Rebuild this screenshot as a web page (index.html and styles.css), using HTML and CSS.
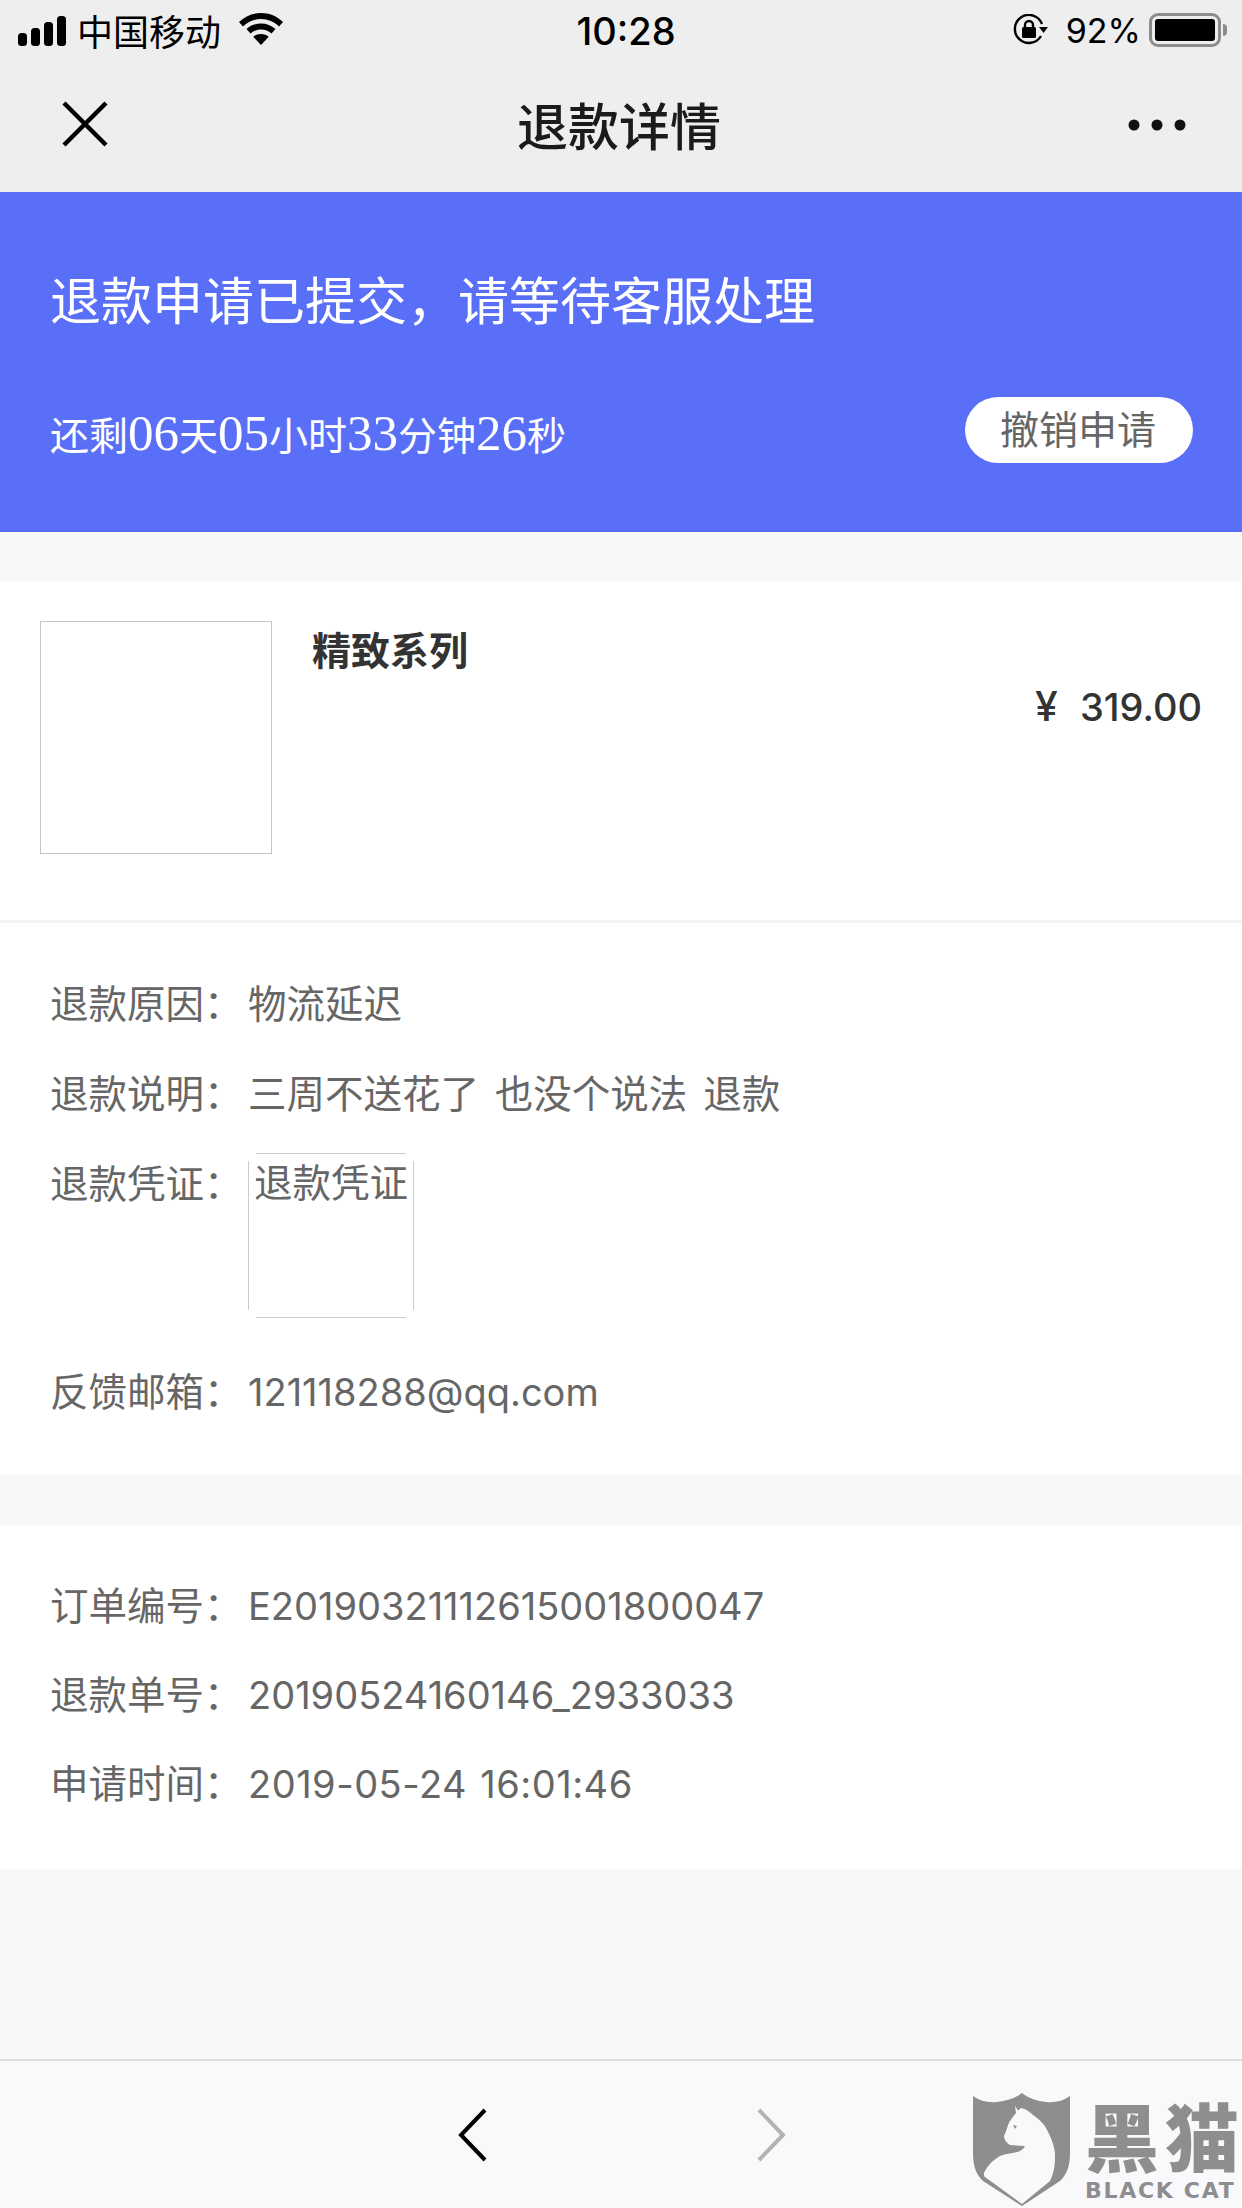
FILE: index.html
```html
<!DOCTYPE html>
<html lang="zh-CN">
<head>
<meta charset="utf-8">
<title>退款详情</title>
<link rel="stylesheet" href="styles.css">
</head>
<body>
<div class="page">
  <header class="top">
    <div class="status">
      <div class="status-left">
        <svg class="signal" width="50" height="30" viewBox="0 0 50 30"><rect x="0" y="17" width="9" height="13" rx="3.5"/><rect x="13" y="12" width="9" height="18" rx="3.5"/><rect x="26" y="6" width="9" height="24" rx="3.5"/><rect x="39" y="0" width="9" height="30" rx="3.5"/></svg>
        <span class="carrier">中国移动</span>
        <svg class="wifi" width="44" height="32" viewBox="0 0 44 32"><path d="M22 0C13.500 0 6 3.200 0 9l4 4.500C9 8.800 15 6 22 6s13 2.800 18 7.500L44 9C38 3.200 30.500 0 22 0z"/><path d="M22 10.500c-5.500 0-10.500 2-14.500 5.500l4 4.500c2.800-2.500 6.500-4 10.500-4s7.700 1.500 10.500 4l4-4.500c-4-3.500-9-5.500-14.500-5.500z"/><path d="M22 21c-3 0-5.600 1-7.700 2.800L22 32l7.700-8.200C27.600 22 25 21 22 21z"/></svg>
      </div>
      <div class="clock">10:28</div>
      <div class="status-right">
        <svg class="lock" width="36" height="32" viewBox="0 0 36 32"><path d="M28 22A14 14 0 1 1 29 10" fill="none" stroke="#000" stroke-width="2.400"/><path d="M26 13h9l-4.500 6z"/><rect x="9" y="13" width="14" height="11" rx="1.500"/><path d="M12 14v-3a4 4 0 0 1 8 0v3" fill="none" stroke="#000" stroke-width="2.400"/></svg>
        <span class="battery-text">92%</span>
        <div class="battery"><div class="battery-fill"></div></div>
        <div class="battery-cap"></div>
      </div>
    </div>
    <div class="nav">
      <svg class="close" width="46" height="46" viewBox="0 0 46 46"><path d="M2 2l42 42M44 2L2 44" fill="none" stroke="#000" stroke-width="4.500"/></svg>
      <h1 class="nav-title">退款详情</h1>
      <svg class="more" width="62" height="14" viewBox="0 0 62 14"><circle cx="8" cy="7" r="5.500"/><circle cx="31" cy="7" r="5.500"/><circle cx="54" cy="7" r="5.500"/></svg>
    </div>
  </header>

  <section class="banner">
    <h2 class="banner-title">退款申请已提交，请等待客服处理</h2>
    <div class="banner-row">
      <div class="countdown">还剩<b>06</b>天<b>05</b>小时<b>33</b>分钟<b>26</b>秒</div>
      <button class="revoke">撤销申请</button>
    </div>
  </section>

  <section class="card product">
    <div class="thumb"></div>
    <div class="product-name">精致系列</div>
    <div class="price"><span class="yen">¥</span>319.00</div>
  </section>
  <section class="card details">
    <div class="row"><span class="label">退款原因：</span><span class="value value-cjk">物流延迟</span></div>
    <div class="row"><span class="label">退款说明：</span><span class="value value-cjk">三周不送花了 也没个说法 退款</span></div>
    <div class="row row-proof"><span class="label">退款凭证：</span><div class="proof">退款凭证</div></div>
    <div class="row"><span class="label">反馈邮箱：</span><span class="value">121118288@qq.com</span></div>
  </section>

  <section class="card order">
    <div class="row"><span class="label">订单编号：</span><span class="value">E20190321112615001800047</span></div>
    <div class="row"><span class="label">退款单号：</span><span class="value">20190524160146_2933033</span></div>
    <div class="row"><span class="label">申请时间：</span><span class="value value-date">2019-05-24 16:01:46</span></div>
  </section>

  <div class="spacer"></div>

  <footer class="toolbar">
    <svg class="chev" width="30" height="54" viewBox="0 0 30 54"><path d="M27 2L3 27l24 25" fill="none" stroke="#000" stroke-width="4"/></svg>
    <svg class="chev chev-next" width="30" height="54" viewBox="0 0 30 54"><path d="M3 2l24 25L3 52" fill="none" stroke="#b3b3b5" stroke-width="4"/></svg>
    <div class="watermark">
      <svg class="shield" width="97" height="114" viewBox="0 0 97 114">
        <path d="M0 3C7 8 15 10 24 9 34 8 43 5 49 0 55 5 64 8 73 9 82 10 90 8 97 3V60C97 75 93 82 87 88L49 113 10 88C4 82 0 75 0 60Z" fill="#8e8d90"/>
        <path d="M42 13L45 17.500 48 15C53 16 57 19 60 22 67 27 71 31 73 35 79 46 82 55 82 63 82 75 80 82 77 88L49 111 12 84C10 82 11 79 12 78 15 72 20 67 27 63 34 60 42 60 47 58 49 57 51 55 52 53L37 52C34 50 31 47 31 43 33 39 34 35 35 32 37 27 40 24 43 20Z" fill="#f9f9fb"/>
        <path d="M40 32l4 1-2 3z" fill="#8e8d90"/>
      </svg>
      <div class="wm-text">
        <div class="wm-cn">黑<span class="wm-cn-last">猫</span></div>
        <div class="wm-en">BLACK CAT</div>
      </div>
    </div>
  </footer>
</div>
</body>
</html>
```

FILE: styles.css
```css
* { box-sizing: border-box; }
html, body { margin: 0; padding: 0; }
body {
  width: 1242px;
  height: 2208px;
  overflow: hidden;
  font-family: "Inter", "Noto Sans CJK SC", sans-serif;
  background: #f8f8f9;
}
.page { display: flex; flex-direction: column; height: 2208px; }

.top { height: 192px; background: #eeeeee; display: flex; flex-direction: column; }
.status { position: relative; height: 60px; display: flex; align-items: center; justify-content: space-between; padding: 0 15px 0 18px; color: #000; }
.status-left { display: flex; align-items: center; }
.signal { margin-top: 1px; }
.carrier { font-size: 36px; margin-left: 9px; line-height: 60px; font-family: "Noto Sans CJK SC", sans-serif; }
.wifi { margin-left: 18px; margin-top: -3px; }
.clock { position: absolute; left: 0; right: 0; top: 0; text-align: center; line-height: 62px; font-size: 38px; font-weight: 500; pointer-events: none; padding-left: 10px; }
.status-right { display: flex; align-items: center; }
.lock { margin-right: 17px; }
.battery-text { font-size: 34px; margin-right: 8px; }
.battery { width: 72px; height: 34px; border: 3px solid #8c8c8c; border-radius: 9px; padding: 3px; }
.battery-fill { width: 100%; height: 100%; background: #000; border-radius: 3px; }
.battery-cap { width: 4px; height: 12px; background: #8c8c8c; border-radius: 0 4px 4px 0; margin-left: 2px; }

.nav { position: relative; flex: 1; display: flex; align-items: center; justify-content: space-between; padding: 0 54px 6px 62px; }
.nav-title { position: absolute; left: 0; right: 0; top: 0; margin: 0; text-align: center; font-size: 51px; line-height: 128px; font-weight: 500; color: #1b1b1b; font-family: "Noto Sans CJK SC", sans-serif; padding-right: 4px; }
.close { margin-top: 2px; }
.more { fill: #111; margin-top: 4px; }

.banner { height: 340px; background: #5a6ff8; color: #fff; padding: 0 50px; display: flex; flex-direction: column; }
.banner-title { margin: 67px 0 0; font-size: 51px; line-height: 78px; font-weight: 400; font-family: "Noto Sans CJK SC", sans-serif; }
.banner-row { display: flex; justify-content: space-between; align-items: center; margin-top: 56px; margin-right: -1px; }
.countdown { font-size: 39px; line-height: 66px; font-family: "Noto Sans CJK SC", sans-serif; padding-top: 7px; }
.countdown b { font-family: "Liberation Serif", serif; font-weight: 400; font-size: 51px; }
.revoke { width: 228px; height: 66px; border: 0; border-radius: 33px; background: #fff; color: #666; font-size: 39px; padding: 0 2px 6px 0; font-family: "Noto Sans CJK SC", sans-serif; }

.card { background: #fff; }
.product { position: relative; margin-top: 50px; height: 341px; border-bottom: 3px solid #f4f4f4; padding: 39px 40px 0; display: flex; align-items: flex-start; }
.thumb { width: 232px; height: 233px; border: 1px solid #c4c4c4; flex: none; }
.product-name { margin-left: 40px; margin-top: -1px; font-size: 39px; line-height: 56px; font-weight: 700; color: #333; font-family: "Noto Sans CJK SC", sans-serif; }
.price { margin-left: auto; margin-top: 57px; font-size: 38px; line-height: 56px; font-weight: 500; color: #333; }
.yen { margin-right: 22px; font-size: 41px; }

.row { display: flex; align-items: baseline; font-size: 38.500px; line-height: 50px; color: #666; height: 90px; padding-left: 50px; }
.label { width: 198px; flex: none; }
.value { font-size: 38px; }
.value-cjk { font-size: 38.500px; word-spacing: 5px; }
.value-date { letter-spacing: 0.500px; word-spacing: 2px; }
.details { height: 552px; padding-top: 56px; }
.row-proof { height: 208px; align-items: flex-start; }
.proof {
  width: 166px; height: 165px; margin-top: -6px; padding-top: 5px; text-align: center; white-space: nowrap;
  background:
    linear-gradient(#ccc, #ccc) 8px 0 / 150px 1px no-repeat,
    linear-gradient(#ccc, #ccc) 8px 100% / 150px 1px no-repeat,
    linear-gradient(#ccc, #ccc) 0 8px / 1px 149px no-repeat,
    linear-gradient(#ccc, #ccc) 100% 8px / 1px 149px no-repeat;
}
.order { margin-top: 50px; height: 344px; padding-top: 56px; }
.order .row { height: 89px; }
.spacer { flex: 1; }

.toolbar { position: relative; height: 149px; background: #f9f9fb; border-top: 2px solid #e0e0e0; display: flex; align-items: flex-start; padding: 47px 0 0 458px; }
.chev-next { margin-left: 268px; }
.watermark { position: absolute; left: 973px; top: 32px; display: flex; align-items: flex-start; color: #8e8d90; }
.wm-text { margin-left: 15px; margin-top: 2px; }
.wm-cn { font-size: 74px; line-height: 78px; font-weight: 900; font-family: "Noto Sans CJK SC", sans-serif; white-space: nowrap; }
.wm-cn-last { margin-left: 6px; }
.wm-en { font-size: 22px; line-height: 24px; font-weight: 700; letter-spacing: 1.700px; margin-top: 6px; white-space: nowrap; font-family: "DejaVu Sans", sans-serif; }
```
